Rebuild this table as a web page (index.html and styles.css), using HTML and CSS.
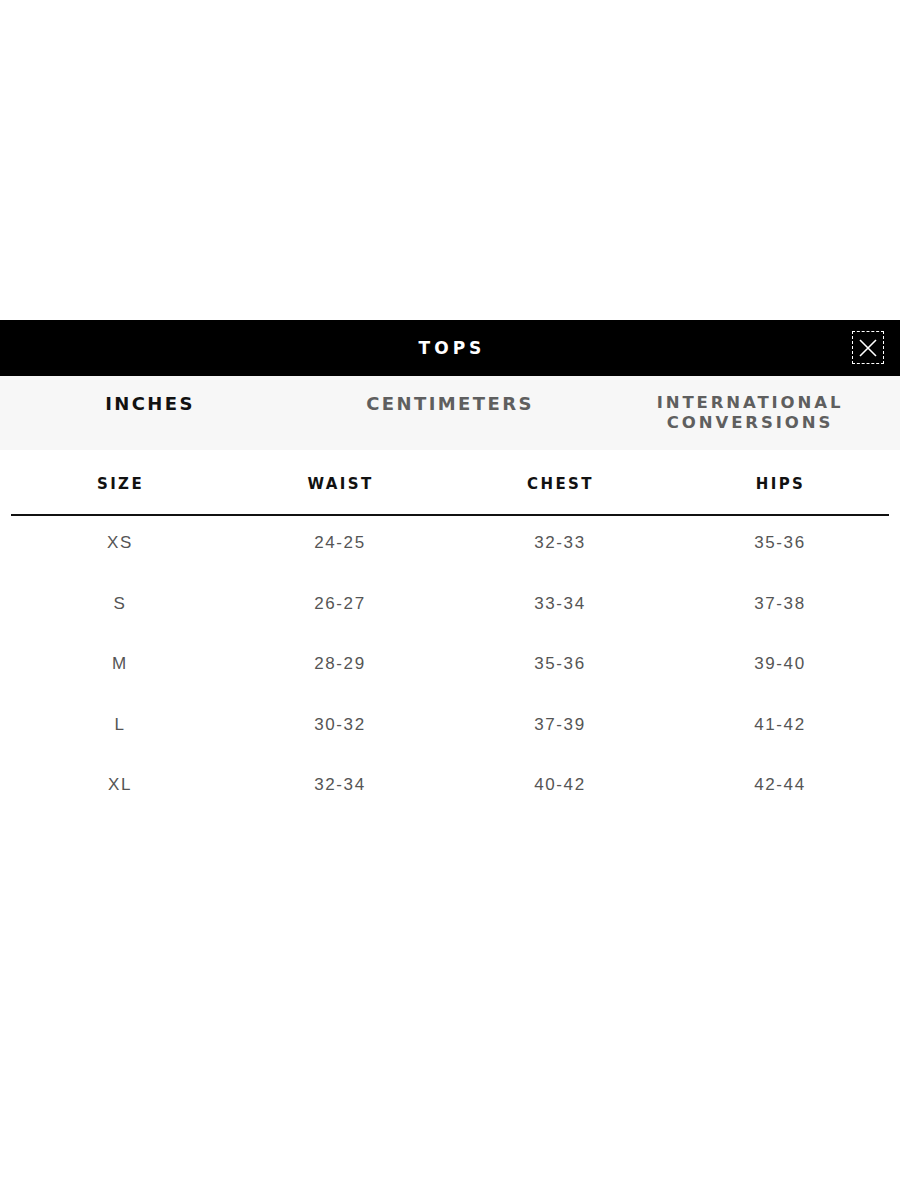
FILE: index.html
```html
<!DOCTYPE html>
<html>
<head>
<meta charset="utf-8">
<link rel="stylesheet" href="styles.css">
</head>
<body>
<div class="page">
  <div class="modal">
    <div class="titlebar">
      <div class="title">TOPS</div>
      <button class="close" aria-label="Close">
        <svg width="18" height="18" viewBox="0 0 18 18"><path d="M1 1L17 17M17 1L1 17" stroke="#fff" stroke-width="1.6" fill="none"/></svg>
      </button>
    </div>
    <div class="tabs">
      <div class="tab active">INCHES</div>
      <div class="tab">CENTIMETERS</div>
      <div class="tab two">INTERNATIONAL<br>CONVERSIONS</div>
    </div>
    <div class="table">
      <div class="thead">
        <div>SIZE</div><div>WAIST</div><div>CHEST</div><div>HIPS</div>
      </div>
      <div class="row"><div>XS</div><div>24-25</div><div>32-33</div><div>35-36</div></div>
      <div class="row"><div>S</div><div>26-27</div><div>33-34</div><div>37-38</div></div>
      <div class="row"><div>M</div><div>28-29</div><div>35-36</div><div>39-40</div></div>
      <div class="row"><div>L</div><div>30-32</div><div>37-39</div><div>41-42</div></div>
      <div class="row"><div>XL</div><div>32-34</div><div>40-42</div><div>42-44</div></div>
    </div>
  </div>
</div>
</body>
</html>
```
FILE: styles.css
```css
* { box-sizing: border-box; }
html, body { margin: 0; padding: 0; background: #fff; }
.page { width: 900px; height: 1200px; padding-top: 320px; }
.modal { width: 900px; }
.titlebar {
  height: 56px;
  background: #000;
  display: flex;
  align-items: center;
  justify-content: center;
  position: relative;
}
.title {
  color: #fff;
  font-family: "DejaVu Sans", sans-serif;
  font-weight: bold;
  font-size: 17px;
  letter-spacing: 4px;
  padding-left: 4px;
}
.close {
  position: absolute;
  right: 16px;
  top: 11px;
  width: 32px;
  height: 33px;
  background: transparent;
  border: 1.5px dashed #fff;
  padding: 0;
  display: flex;
  align-items: center;
  justify-content: center;
}
.tabs {
  display: grid;
  grid-template-columns: 300px 300px 300px;
  background: #f7f7f7;
  height: 74px;
  padding-top: 19px;
}
.tab {
  text-align: center;
  font-family: "DejaVu Sans", sans-serif;
  font-weight: bold;
  font-size: 18px;
  line-height: 18px;
  letter-spacing: 2.4px;
  color: #5f5f5f;
}
.tab.two {
  font-size: 16.5px;
  line-height: 19.5px;
  letter-spacing: 2.9px;
  margin-top: -2px;
}
.tab.active { color: #111; }
.table { padding: 0 10px; }
.thead {
  display: grid;
  grid-template-columns: repeat(4, 220px);
  height: 66px;
  align-items: center;
  border-bottom: 2px solid #111;
  margin: 0 1px;
  padding-top: 3px;
}
.thead div {
  text-align: center;
  font-family: "DejaVu Sans", sans-serif;
  font-weight: bold;
  font-size: 15px;
  letter-spacing: 2.4px;
  color: #111;
  margin-left: -1px;
}
.row {
  display: grid;
  grid-template-columns: repeat(4, 220px);
  height: 60.5px;
  align-items: center;
}
.row div {
  text-align: center;
  font-family: "Liberation Sans", Arial, sans-serif;
  font-size: 17px;
  letter-spacing: 1.6px;
  color: #555;
}
.thead + .row { margin-top: -3px; }
```
